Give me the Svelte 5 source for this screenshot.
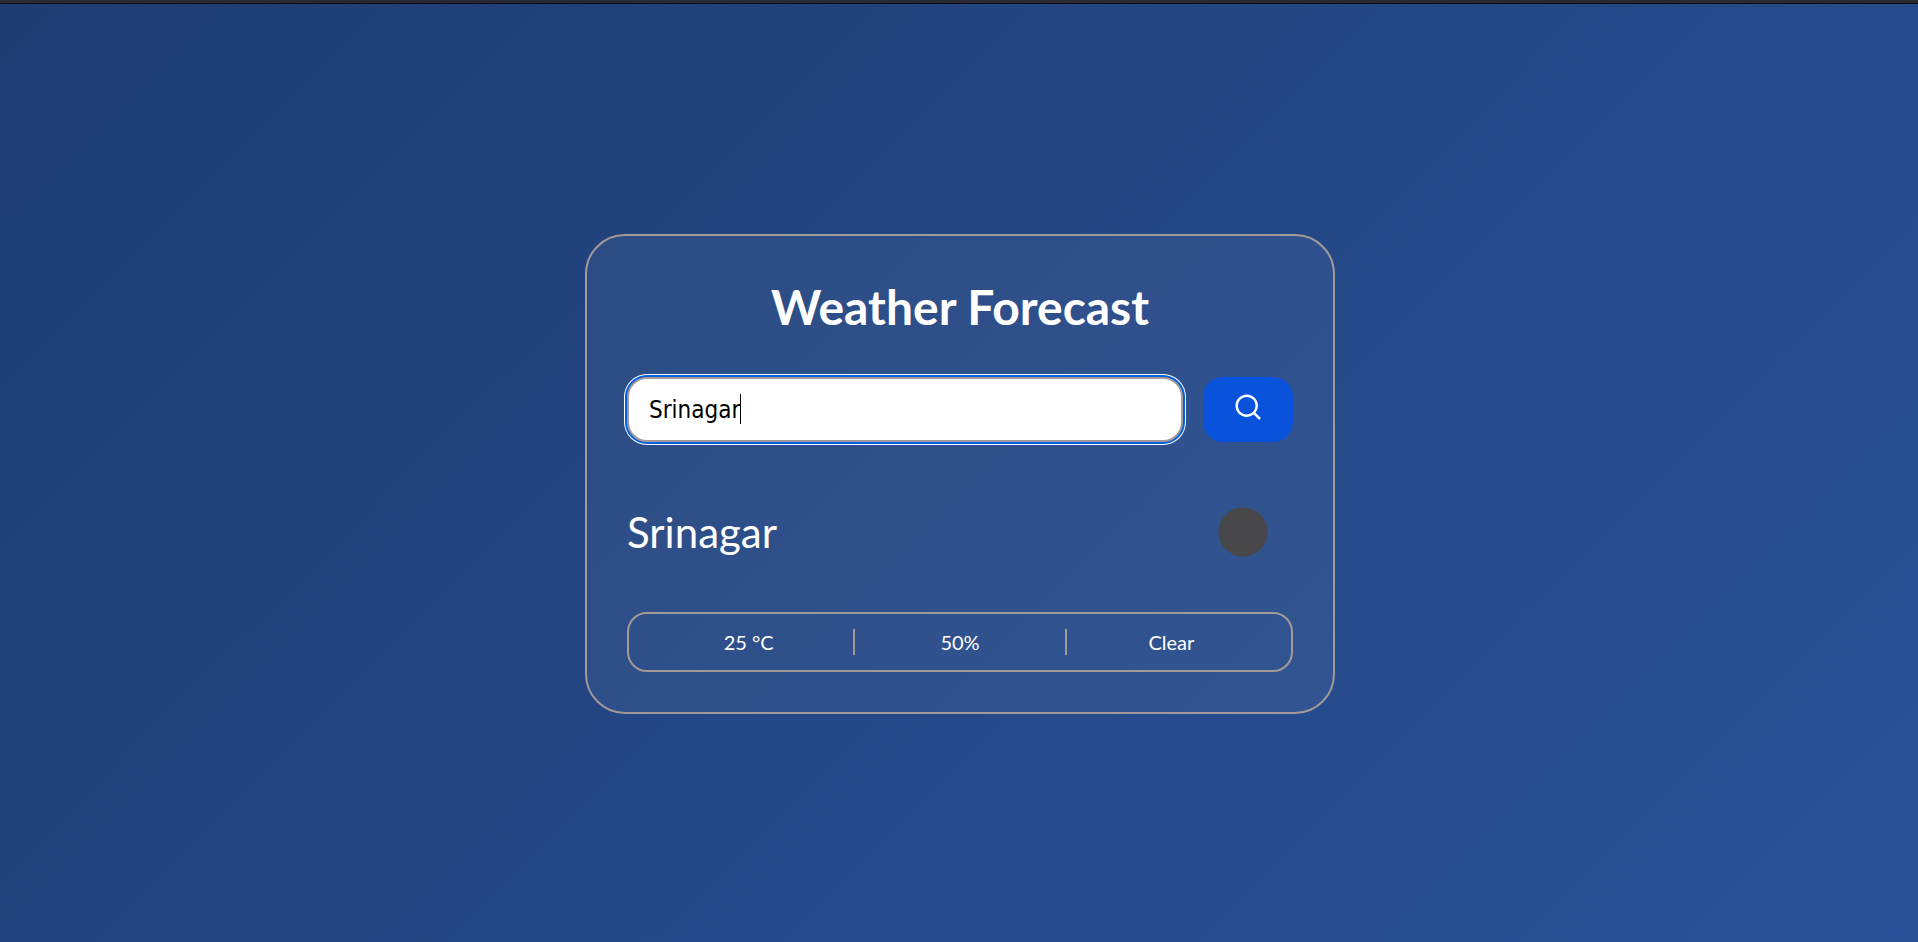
<script>
  import { onMount } from 'svelte';

  let query = $state('Srinagar');
  let weather = $state({
    city: 'Srinagar',
    stats: ['25 °C', '50%', 'Clear']
  });

  let field;
  let caretOffset = $state(0);

  // Keeps the drawn caret at the end of the typed text
  function placeCaret() {
    const context = document.createElement('canvas').getContext('2d');
    const style = getComputedStyle(field);
    context.font = `${style.fontSize} ${style.fontFamily}`;
    caretOffset = Math.round(context.measureText(query).width);
  }

  function search(event) {
    event.preventDefault();
    weather.city = query;
  }

  onMount(placeCaret);
</script>

<div class="page">
  <main class="card">
    <h1>Weather Forecast</h1>

    <form class="search" onsubmit={search}>
      <div class="field">
        <input
          type="text"
          aria-label="City"
          bind:this={field}
          bind:value={query}
          oninput={placeCaret}
        />
        <span class="caret" style:--offset="{caretOffset}px"></span>
      </div>
      <button type="submit" aria-label="Search">
        <svg viewBox="0 0 24 24" width="30" height="30" fill="currentColor" aria-hidden="true">
          <path d="M18.031 16.617l4.283 4.282-1.415 1.415-4.282-4.283A8.96 8.96 0 0 1 11 20c-4.968 0-9-4.032-9-9s4.032-9 9-9 9 4.032 9 9a8.96 8.96 0 0 1-1.969 5.617zm-2.006-.742A6.977 6.977 0 0 0 18 11c0-3.868-3.133-7-7-7-3.868 0-7 3.132-7 7 0 3.867 3.132 7 7 7a6.977 6.977 0 0 0 4.875-1.975l.15-.15z" />
        </svg>
      </button>
    </form>

    <section class="place">
      <h2>{weather.city}</h2>
      <svg viewBox="0 0 100 100" width="100" height="100" aria-hidden="true">
        <circle cx="50" cy="50" r="24.5" fill="#48484a" />
      </svg>
    </section>

    <ul class="stats">
      {#each weather.stats as stat}
        <li>{stat}</li>
      {/each}
    </ul>
  </main>
</div>

<style>
  :global(body) {
    margin: 0;
  }

  .page {
    position: relative;
    box-sizing: border-box;
    min-height: 100vh;
    display: flex;
    align-items: center;
    justify-content: center;
    padding: 2px 0 0 2px;
    border-top: 4px solid #2b2a33;
    background: linear-gradient(135deg, #1e3c72, #2a5298) padding-box;
    color: #fff;
    font-family: Lato, sans-serif;
  }

  .page::before {
    content: '';
    position: absolute;
    inset: -1px 0 auto;
    height: 1px;
    background: #0c0c12;
  }

  .card {
    box-sizing: border-box;
    width: 100%;
    max-width: 750px;
    padding: 40px;
    border: 2px solid #a39999;
    border-radius: 40px;
    background: rgba(255, 255, 255, 0.05);
  }

  h1,
  h2 {
    margin: 0;
  }

  h1 {
    font-size: 48px;
    line-height: 61px;
    text-align: center;
  }

  .search {
    display: flex;
    gap: 20px;
    margin-top: 40px;
  }

  .field {
    position: relative;
    flex: 1;
    display: flex;
  }

  input {
    box-sizing: border-box;
    width: 100%;
    height: 65px;
    padding: 0 20px;
    border: 2px solid #a39999;
    border-radius: 20px;
    background: #fff;
    color: #000;
    caret-color: transparent;
    outline: none;
    box-shadow: 0 0 0 2px #0060df, 0 0 0 3px #fff;
    font-family: 'DejaVu Sans Condensed', 'Noto Sans', sans-serif;
    font-size: 24px;
  }

  .caret {
    position: absolute;
    top: 17px;
    left: calc(22px + var(--offset));
    width: 1px;
    height: 30px;
    background: #000;
  }

  button {
    width: 90px;
    display: flex;
    align-items: center;
    justify-content: center;
    padding: 0 0 6px;
    border: 0;
    border-radius: 20px;
    background: #0952db;
    color: #fff;
    cursor: pointer;
  }

  .place {
    display: flex;
    align-items: center;
    justify-content: space-between;
    margin: 40px 0 30px;
  }

  h2 {
    font-size: 42px;
    font-weight: 400;
    line-height: 50px;
  }

  .stats {
    display: flex;
    margin: 0;
    padding: 15px;
    border: 2px solid #a39999;
    border-radius: 20px;
    list-style: none;
    font-size: 20px;
    line-height: 26px;
  }

  li {
    flex: 1;
    text-align: center;
  }

  li + li {
    border-left: 2px solid #a39999;
  }
</style>
